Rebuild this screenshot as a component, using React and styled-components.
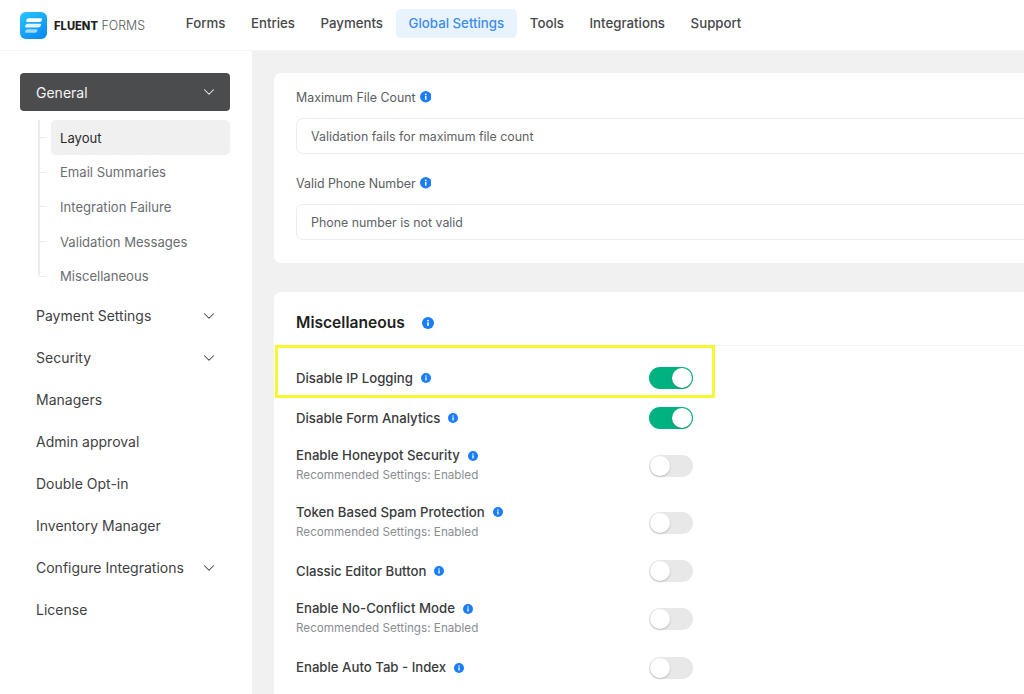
import styled, { createGlobalStyle } from 'styled-components';
import { ChevronDown } from 'lucide-react';

const navItems = ['Forms', 'Entries', 'Payments', 'Global Settings', 'Tools', 'Integrations', 'Support'];
const subItems = ['Layout', 'Email Summaries', 'Integration Failure', 'Validation Messages', 'Miscellaneous'];
const sideItems = [
   { label: 'Payment Settings', arrow: true },
   { label: 'Security', arrow: true },
   { label: 'Managers' },
   { label: 'Admin approval' },
   { label: 'Double Opt-in' },
   { label: 'Inventory Manager' },
   { label: 'Configure Integrations', arrow: true },
   { label: 'License' },
];
const inputs = [
   { label: 'Maximum File Count', value: 'Validation fails for maximum file count' },
   { label: 'Valid Phone Number', value: 'Phone number is not valid' },
];
const hint = 'Recommended Settings: Enabled';
const settings = [
   { label: 'Disable IP Logging', on: true },
   { label: 'Disable Form Analytics', on: true },
   { label: 'Enable Honeypot Security', hint },
   { label: 'Token Based Spam Protection', hint },
   { label: 'Classic Editor Button' },
   { label: 'Enable No-Conflict Mode', hint },
   { label: 'Enable Auto Tab - Index' },
];

const Info = ({ size = 11 }) => (
   <InfoIcon width={size} height={size} viewBox="0 0 12 12">
      <circle cx="6" cy="6" r="6" fill="#1a7efb" />
      <rect x="5.2" y="5.2" width="1.6" height="3.8" rx="0.4" fill="#fff" />
      <circle cx="6" cy="3.6" r="0.95" fill="#fff" />
   </InfoIcon>
);

const Logo = () => (
   <svg width="27" height="27" viewBox="0 0 28 28">
      <defs>
         <linearGradient id="logoFill" x1="0.2" y1="0" x2="0.8" y2="1">
            <stop offset="0" stopColor="#25c2fb" />
            <stop offset="1" stopColor="#0b8af3" />
         </linearGradient>
      </defs>
      <rect width="28" height="28" rx="6" fill="url(#logoFill)" />
      <path d="M9.4 6.6h12.4c.9 0 1.3.8 1 1.5l-.4.9c-.5 1-1.2 1.4-2.2 1.4H7.4c-.9 0-1.3-.8-1-1.5l.4-.9c.5-1 1.5-1.4 2.6-1.4z" fill="#fff" />
      <path d="M8.4 12.2h12.4c.9 0 1.3.8 1 1.5l-.4.9c-.5 1-1.2 1.4-2.2 1.4H6.4c-.9 0-1.3-.8-1-1.5l.4-.9c.5-1 1.5-1.4 2.6-1.4z" fill="#fff" fillOpacity="0.88" />
      <path d="M8.4 17.8h8.6c.9 0 1.3.8 1 1.5l-.4.9c-.5 1-1.2 1.4-2.2 1.4H6.4c-.9 0-1.3-.8-1-1.5l.4-.9c.5-1 1.5-1.4 2.6-1.4z" fill="#fff" fillOpacity="0.6" />
   </svg>
);

const App = () => {
   return (
      <Page>
         <GlobalStyle />
         <Header>
            <Brand>
               <Logo />
               <BrandText><b>FLUENT</b> FORMS</BrandText>
            </Brand>
            <Nav>
               {navItems.map((item) => (
                  <NavLink key={item} $active={item === 'Global Settings'}>{item}</NavLink>
               ))}
            </Nav>
         </Header>
         <Body>
            <Sidebar>
               <GeneralItem>
                  General
                  <ChevronDown size={18} strokeWidth={1.4} />
               </GeneralItem>
               <SubList>
                  {subItems.map((item) => (
                     <SubItem key={item} $active={item === 'Layout'}>{item}</SubItem>
                  ))}
               </SubList>
               {sideItems.map((item) => (
                  <SideItem key={item.label}>
                     {item.label}
                     {item.arrow && <ChevronDown size={18} strokeWidth={1.4} />}
                  </SideItem>
               ))}
            </Sidebar>
            <Main>
               <FieldsCard>
                  {inputs.map((field) => (
                     <Field key={field.label}>
                        <FieldLabel>{field.label}<Info size={11.5} /></FieldLabel>
                        <TextInput readOnly value={field.value} />
                     </Field>
                  ))}
               </FieldsCard>
               <SettingsCard>
                  <CardTitle>Miscellaneous<Info size={12} /></CardTitle>
                  <Highlight />
                  <SettingsList>
                     {settings.map((item) => (
                        <SettingRow key={item.label}>
                           <div>
                              <SettingLabel>{item.label}<Info size={10} /></SettingLabel>
                              {item.hint && <SettingHint>{item.hint}</SettingHint>}
                           </div>
                           <Toggle $on={item.on} />
                        </SettingRow>
                     ))}
                  </SettingsList>
               </SettingsCard>
            </Main>
         </Body>
      </Page>
   );
};
export default App;

const GlobalStyle = createGlobalStyle`
   html, body {
      margin: 0;
      padding: 0;
      height: 100%;
      overflow: hidden;
      background: #fff;
   }
   * {
      box-sizing: border-box;
   }
`;

const Page = styled.div`
   width: 1024px;
   height: 694px;
   overflow: hidden;
   display: flex;
   flex-flow: column nowrap;
   font-family: Inter, "Liberation Sans", sans-serif;
   color: #3a3b3d;
`;

const Header = styled.header`
   flex: 0 0 51px;
   display: flex;
   align-items: center;
   padding-left: 20px;
   background: #fff;
   border-bottom: 1px solid #f5f5f5;
`;

const Brand = styled.div`
   flex: 0 0 153px;
   display: flex;
   align-items: center;
   gap: 7px;
`;

const BrandText = styled.span`
   font-size: 12.4px;
   font-weight: 300;
   white-space: nowrap;
   color: #55585c;
   & > b {
      font-size: 11.2px;
      font-weight: 800;
      color: #1e1f21;
   }
`;

const Nav = styled.nav`
   display: flex;
   align-items: center;
   margin-bottom: 3px;
`;

const NavLink = styled.a`
   padding: 0 12.8px 1px;
   height: 29px;
   display: flex;
   align-items: center;
   border-radius: 5px;
   font-size: 13.25px;
   font-weight: 500;
   color: ${(props) => (props.$active ? '#3c8ee8' : '#45474a')};
   background: ${(props) => (props.$active ? '#e9f3fe' : 'transparent')};
`;

const Body = styled.div`
   flex: 1;
   display: flex;
   min-height: 0;
`;

const Sidebar = styled.aside`
   flex: 0 0 252px;
   padding: 22px 22px 0 20px;
   background: #fff;
`;

const GeneralItem = styled.div`
   height: 38px;
   padding: 0 12px 0 16px;
   display: flex;
   align-items: center;
   justify-content: space-between;
   border-radius: 4px;
   background: #4b4c4d;
   color: #f4f4f4;
   font-size: 14px;
`;

const SubList = styled.div`
   position: relative;
   margin: 9px 0 2px 18px;
   padding-left: 13px;
   display: flex;
   flex-flow: column nowrap;
   &::before {
      content: '';
      position: absolute;
      top: 0;
      left: 0;
      bottom: 17px;
      width: 2px;
      background: #ececec;
      border-radius: 0 0 0 4px;
   }
`;

const SubItem = styled.div`
   position: relative;
   height: 34.6px;
   padding: 1px 0 0 9px;
   display: flex;
   align-items: center;
   border-radius: 5px;
   font-size: 13.1px;
   color: ${(props) => (props.$active ? '#2a2b2d' : '#6a6d71')};
   background: ${(props) => (props.$active ? '#f0f0f0' : 'transparent')};
   &::before {
      content: '';
      position: absolute;
      left: -12px;
      top: 50%;
      width: 7px;
      height: 1px;
      background: #ececec;
   }
`;

const SideItem = styled.div`
   height: 42px;
   padding: 0 12px 0 16px;
   display: flex;
   align-items: center;
   justify-content: space-between;
   font-size: 14px;
   color: #3f4144;
`;

const Main = styled.main`
   flex: 1;
   min-width: 0;
   padding: 22px 0 0 22px;
   background: #f1f1f1;
   overflow: hidden;
`;

const Card = styled.section`
   margin-right: -30px;
   background: #fff;
   border-radius: 7px;
`;

const FieldsCard = styled(Card)`
   height: 190px;
   padding: 15px 22px 0;
   display: flex;
   flex-flow: column nowrap;
   gap: 20px;
`;

const SettingsCard = styled(Card)`
   position: relative;
   margin-top: 29px;
   padding: 0 22px;
   height: 420px;
`;

const Field = styled.div`
   display: flex;
   flex-flow: column nowrap;
   gap: 12px;
`;

const FieldLabel = styled.label`
   height: 18px;
   display: flex;
   align-items: center;
   gap: 4px;
   font-size: 12.4px;
   color: #5a5d61;
`;

const TextInput = styled.input`
   width: 100%;
   height: 36px;
   padding: 0 14px;
   border: 1px solid #ececec;
   border-radius: 7px;
   background: #fff;
   outline: none;
   font-family: inherit;
   font-size: 12.4px;
   color: #606266;
`;

const InfoIcon = styled.svg`
   flex: none;
`;

const CardTitle = styled.h3`
   margin: 0 -22px;
   padding: 8px 22px 0;
   height: 54px;
   display: flex;
   align-items: center;
   gap: 17px;
   font-size: 15.6px;
   font-weight: 600;
   color: #1e1f21;
   border-bottom: 1px solid #f5f5f5;
`;

const Highlight = styled.div`
   position: absolute;
   top: 53px;
   left: 1px;
   width: 440px;
   height: 53px;
   border: 3px solid #f7f733;
`;

const SettingsList = styled.div`
   padding-top: 21px;
   width: 397px;
   display: flex;
   flex-flow: column nowrap;
   gap: 18px;
`;

const SettingRow = styled.div`
   display: flex;
   align-items: center;
   justify-content: space-between;
   min-height: 22px;
`;

const SettingLabel = styled.div`
   display: flex;
   align-items: center;
   gap: 8px;
   font-size: 13.2px;
   font-weight: 500;
   line-height: 17px;
   color: #3a3b3d;
`;

const SettingHint = styled.div`
   padding-top: 2px;
   font-size: 11.7px;
   line-height: 19.5px;
   color: #8a8d91;
`;

const Toggle = styled.span`
   position: relative;
   flex: none;
   width: 44px;
   height: 22px;
   border-radius: 11px;
   background: ${(props) => (props.$on ? '#00b27f' : '#e8e8e8')};
   &::after {
      content: '';
      position: absolute;
      top: 1px;
      left: ${(props) => (props.$on ? '23px' : '1px')};
      width: 20px;
      height: 20px;
      border-radius: 50%;
      background: #fff;
      box-shadow: 0 1px 2px rgba(0, 0, 0, 0.2);
   }
`;
